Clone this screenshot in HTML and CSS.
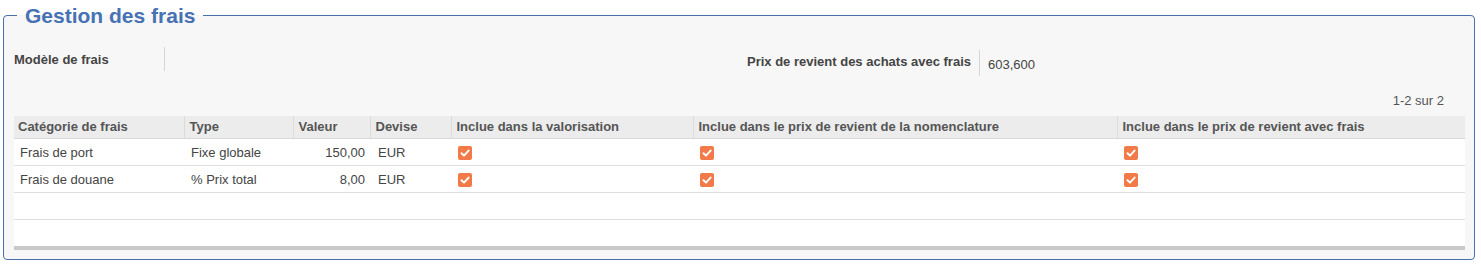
FILE: index.html
```html
<!DOCTYPE html>
<html lang="fr">
<head>
<meta charset="utf-8">
<title>Gestion des frais</title>
<link rel="stylesheet" href="styles.css">
</head>
<body>
<fieldset class="panel">
  <legend class="panel-title">Gestion des frais</legend>
  <div class="form-row">
    <div class="field field-left">
      <div class="field-label">Modèle de frais</div>
      <div class="field-value"></div>
    </div>
    <div class="field field-right">
      <div class="field-label">Prix de revient des achats avec frais</div>
      <div class="field-value">603,600</div>
    </div>
  </div>
  <div class="pager">1-2 sur 2</div>
  <div class="grid-wrap">
    <table class="grid">
      <colgroup>
        <col class="c1"><col class="c2"><col class="c3"><col class="c4"><col class="c5"><col class="c6"><col class="c7">
      </colgroup>
      <thead>
        <tr>
          <th class="first">Catégorie de frais</th>
          <th>Type</th>
          <th>Valeur</th>
          <th>Devise</th>
          <th>Inclue dans la valorisation</th>
          <th>Inclue dans le prix de revient de la nomenclature</th>
          <th>Inclue dans le prix de revient avec frais</th>
        </tr>
      </thead>
      <tbody>
        <tr>
          <td>Frais de port</td>
          <td>Fixe globale</td>
          <td class="num">150,00</td>
          <td>EUR</td>
          <td><span class="check"><svg viewBox="0 0 14 14" width="14" height="14"><path d="M3.5 7.2 L6 9.6 L10.6 4.6" fill="none" stroke="#fff" stroke-width="2" stroke-linecap="round" stroke-linejoin="round"/></svg></span></td>
          <td><span class="check"><svg viewBox="0 0 14 14" width="14" height="14"><path d="M3.5 7.2 L6 9.6 L10.6 4.6" fill="none" stroke="#fff" stroke-width="2" stroke-linecap="round" stroke-linejoin="round"/></svg></span></td>
          <td><span class="check"><svg viewBox="0 0 14 14" width="14" height="14"><path d="M3.5 7.2 L6 9.6 L10.6 4.6" fill="none" stroke="#fff" stroke-width="2" stroke-linecap="round" stroke-linejoin="round"/></svg></span></td>
        </tr>
        <tr>
          <td>Frais de douane</td>
          <td>% Prix total</td>
          <td class="num">8,00</td>
          <td>EUR</td>
          <td><span class="check"><svg viewBox="0 0 14 14" width="14" height="14"><path d="M3.5 7.2 L6 9.6 L10.6 4.6" fill="none" stroke="#fff" stroke-width="2" stroke-linecap="round" stroke-linejoin="round"/></svg></span></td>
          <td><span class="check"><svg viewBox="0 0 14 14" width="14" height="14"><path d="M3.5 7.2 L6 9.6 L10.6 4.6" fill="none" stroke="#fff" stroke-width="2" stroke-linecap="round" stroke-linejoin="round"/></svg></span></td>
          <td><span class="check"><svg viewBox="0 0 14 14" width="14" height="14"><path d="M3.5 7.2 L6 9.6 L10.6 4.6" fill="none" stroke="#fff" stroke-width="2" stroke-linecap="round" stroke-linejoin="round"/></svg></span></td>
        </tr>
        <tr class="empty"><td></td><td></td><td></td><td></td><td></td><td></td><td></td></tr>
        <tr class="empty"><td></td><td></td><td></td><td></td><td></td><td></td><td></td></tr>
      </tbody>
    </table>
    <div class="scrollbar"></div>
  </div>
</fieldset>
</body>
</html>
```

FILE: styles.css
```css
html, body {
  margin: 0;
  padding: 0;
  background: #fff;
}
body {
  font-family: "Liberation Sans", Arial, sans-serif;
  font-size: 13px;
  color: #444;
  padding: 4px 6px 0 3px;
}
.panel {
  margin: 0;
  border: 1px solid #4a6fa9;
  border-radius: 4px;
  background: #f7f7f7;
  padding: 0 9px 9px 10px;
  min-width: 0;
}
.panel-title {
  font-size: 21px;
  font-weight: bold;
  line-height: 23px;
  color: #4672b4;
  padding: 0 8px;
  margin-left: 3px;
}
.form-row {
  display: flex;
  align-items: flex-start;
  margin-top: 20px;
  height: 46px;
}
.field {
  display: flex;
  align-items: stretch;
}
.field-left {
  width: 725px;
}
.field-left .field-label {
  width: 150px;
  font-weight: bold;
  color: #444;
  padding-top: 5px;
  height: 19px;
}
.field-left .field-value {
  border-left: 1px solid #d6d6d6;
}
.field-right {
  margin-top: 3px;
}
.field-right .field-label {
  width: 232px;
  font-weight: bold;
  color: #444;
  text-align: right;
  padding: 4px 8px 0 0;
  height: 22px;
}
.field-right .field-value {
  border-left: 1px solid #d6d6d6;
  padding: 7px 0 0 8px;
  color: #444;
}
.pager {
  text-align: right;
  padding-right: 21px;
  color: #555;
  line-height: 15px;
  height: 23px;
}
.grid-wrap {
  background: #fff;
}
.grid {
  width: 100%;
  table-layout: fixed;
  border-collapse: collapse;
  border-spacing: 0;
}
.c1 { width: 170px; }
.c2 { width: 109px; }
.c3 { width: 77px; }
.c4 { width: 81px; }
.c5 { width: 242px; }
.c6 { width: 424px; }
.c7 { width: auto; }
.grid th {
  background: #ececec;
  color: #555;
  font-weight: bold;
  text-align: left;
  height: 22px;
  padding: 0 0 0 5px;
  border-left: 1px solid #dcdcdc;
  border-bottom: 1px solid #d9d9d9;
  white-space: nowrap;
  overflow: hidden;
  line-height: 22px;
}
.grid th.first {
  border-left: none;
  padding-left: 4px;
}
.grid td {
  height: 26px;
  padding: 0 0 0 6px;
  border-bottom: 1px solid #dedede;
  color: #444;
  white-space: nowrap;
  vertical-align: middle;
}
.grid td:nth-child(2) { padding-left: 7px; }
.grid td:nth-child(4) { padding-left: 8px; }
.grid td:nth-child(n+5) { padding-left: 7px; }
.grid td.num {
  text-align: right;
  padding: 0 5px 0 0;
}
.grid tr.empty td {
  height: 26px;
}
.grid tr.empty:last-child td {
  border-bottom: none;
}
.check {
  display: inline-block;
  width: 14px;
  height: 14px;
  border-radius: 2px;
  background: #f27a48;
  vertical-align: middle;
  margin-top: -1px;
}
.check svg {
  display: block;
}
.scrollbar {
  height: 4px;
  background: #c9c9c9;
}
```
